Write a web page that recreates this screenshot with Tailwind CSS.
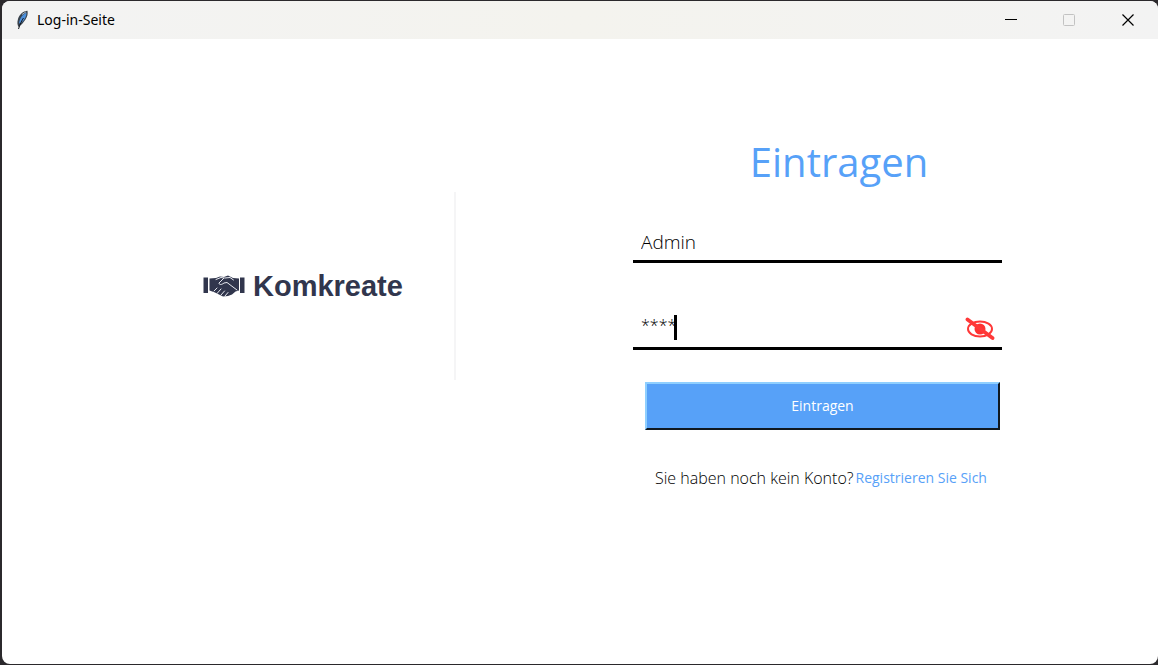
<!DOCTYPE html>
<html lang="de">
<head>
<meta charset="utf-8">
<meta name="viewport" content="width=device-width, initial-scale=1">
<title>Log-in-Seite</title>
<script src="https://cdn.jsdelivr.net/npm/@tailwindcss/browser@4"></script>
</head>
<body class="bg-[#2b292c] font-['Open_Sans','Noto_Sans',sans-serif] text-black">
<div class="flex min-h-screen pt-px pl-0.5 pb-px">
<div class="flex grow flex-col overflow-hidden rounded-lg bg-white">
  <header class="flex h-[38px] items-center bg-linear-to-r from-[#f3f3f3] via-[#f4f3ee] to-[#f3f3f3] pl-3">
    <svg class="h-5 w-4" viewBox="0 0 16 20" aria-hidden="true">
      <path d="M13.500 .8C9 1 5.500 4.500 4 9C3 12.500 3.300 14.500 4.500 17C6 16 8.500 14 10 11.500L11.500 9.500C13.500 6.500 14 4 13.500 .8Z" fill="#39424c"/>
      <path d="M12.600 2.500C9 4 5.500 8 5 13.500L7.500 12.500C10.500 10 12.500 6.500 12.600 2.500Z" fill="#4b8fdc"/>
      <path d="M9.500 8C8 10 6 14 4.500 19" fill="none" stroke="#15191e"/>
      <path d="M12 1.800L8 4.500" stroke="#a9b4bf" fill="none"/>
    </svg>
    <h1 class="ml-[7px] grow font-['Noto_Sans'] text-sm">Log-in-Seite</h1>
    <button type="button" aria-label="Minimieren" class="flex h-full w-[58px] items-center justify-center"><svg class="size-3" viewBox="0 0 12 12"><path d="M0 5.500H12" stroke="#000"/></svg></button>
    <button type="button" aria-label="Maximieren" disabled class="flex h-full w-[58px] items-center justify-center"><svg class="size-3" viewBox="0 0 12 12"><rect x=".5" y=".5" width="11" height="11" rx="1" fill="none" stroke="#c2c2c2"/></svg></button>
    <button type="button" aria-label="Schließen" class="flex h-full w-[60px] items-center justify-center"><svg class="size-3" viewBox="0 0 12 12"><path d="M.5 .5L11.500 11.500M11.500 .5L.5 11.500" stroke="#000" stroke-width="1.200"/></svg></button>
  </header>
  <main class="flex grow justify-center gap-[177px]">
    <div class="mt-[153px] flex h-[188px] w-[298px] items-center gap-2 border-r-2 border-[#f5f5f6] pl-[45px] text-[#31364d]">
      <svg class="h-6 w-[42px]" viewBox="0 0 42 24" aria-hidden="true">
        <path d="M.5 3.500H5V19H.5ZM37 3.500H41.500V19H37Z" fill="#31364d"/>
        <path d="M6.500 4.500L13 4L17 2.500L21 3L25 1.500L30 4L36 4.500V16.500L32.500 17.500L29 20.500L25 22L20 22.500L16 20.500L12 18.500L6.500 16.500Z" fill="#31364d"/>
        <path d="M13 5.500L18 3.500L21 4M21 4L16 9C16 11 18.500 11 21 9L24 8.500L34 16M22 4L27 3.500L30.500 6M11 17L14 14M14 19.500L18 15M18 21L21.500 17M22 22L25 18.500" fill="none" stroke="#e8eaf0" stroke-linecap="round"/>
      </svg>
      <span class="font-['Liberation_Sans'] text-[29px] leading-8 font-bold">Komkreate</span>
    </div>
    <form class="mt-24 w-[369px]">
      <h2 class="pl-[43px] text-center text-[40px] leading-[54px] text-[#57a1f8]">Eintragen</h2>
      <div class="mt-[26px] flex h-12 items-end border-b-3 border-black pb-1">
        <input type="text" aria-label="Benutzername" value="Admin" class="w-full px-2 text-[19px] leading-7 font-light outline-none">
      </div>
      <div class="relative mt-[39px] flex h-12 items-center border-b-3 border-black">
        <input type="text" aria-label="Passwort" value="****" class="w-full px-2 text-base font-light outline-none">
        <span class="absolute top-[13px] left-[41px] h-[25px] w-[3px] bg-black"></span>
        <button type="button" aria-label="Passwort anzeigen" class="mt-2 mr-[7px]">
          <svg class="h-6 w-[30px]" viewBox="0 0 30 24" fill="none" stroke="#ff3838"><ellipse cx="15" cy="12" rx="12" ry="7.500" stroke-width="2"/><circle cx="15" cy="12" r="5.500" fill="#ff3232" stroke="none"/><path d="M2.500 2.500L27.500 21" stroke-width="3.800" stroke-linecap="round"/></svg>
        </button>
      </div>
      <button type="button" class="mt-8 ml-3 block h-12 w-[355px] border-2 border-t-[#8fcfff] border-r-[#101820] border-b-[#101820] border-l-[#8fcfff] bg-[#57a1f8] text-sm text-white">Eintragen</button>
      <p class="mt-[38px] flex items-center gap-0.5 pl-[22px] text-base leading-5 whitespace-nowrap"><span class="font-light">Sie haben noch kein Konto?</span><a href="#" class="text-sm leading-5 text-[#57a1f8]">Registrieren Sie Sich</a></p>
    </form>
  </main>
</div>
</div>
</body>
</html>
